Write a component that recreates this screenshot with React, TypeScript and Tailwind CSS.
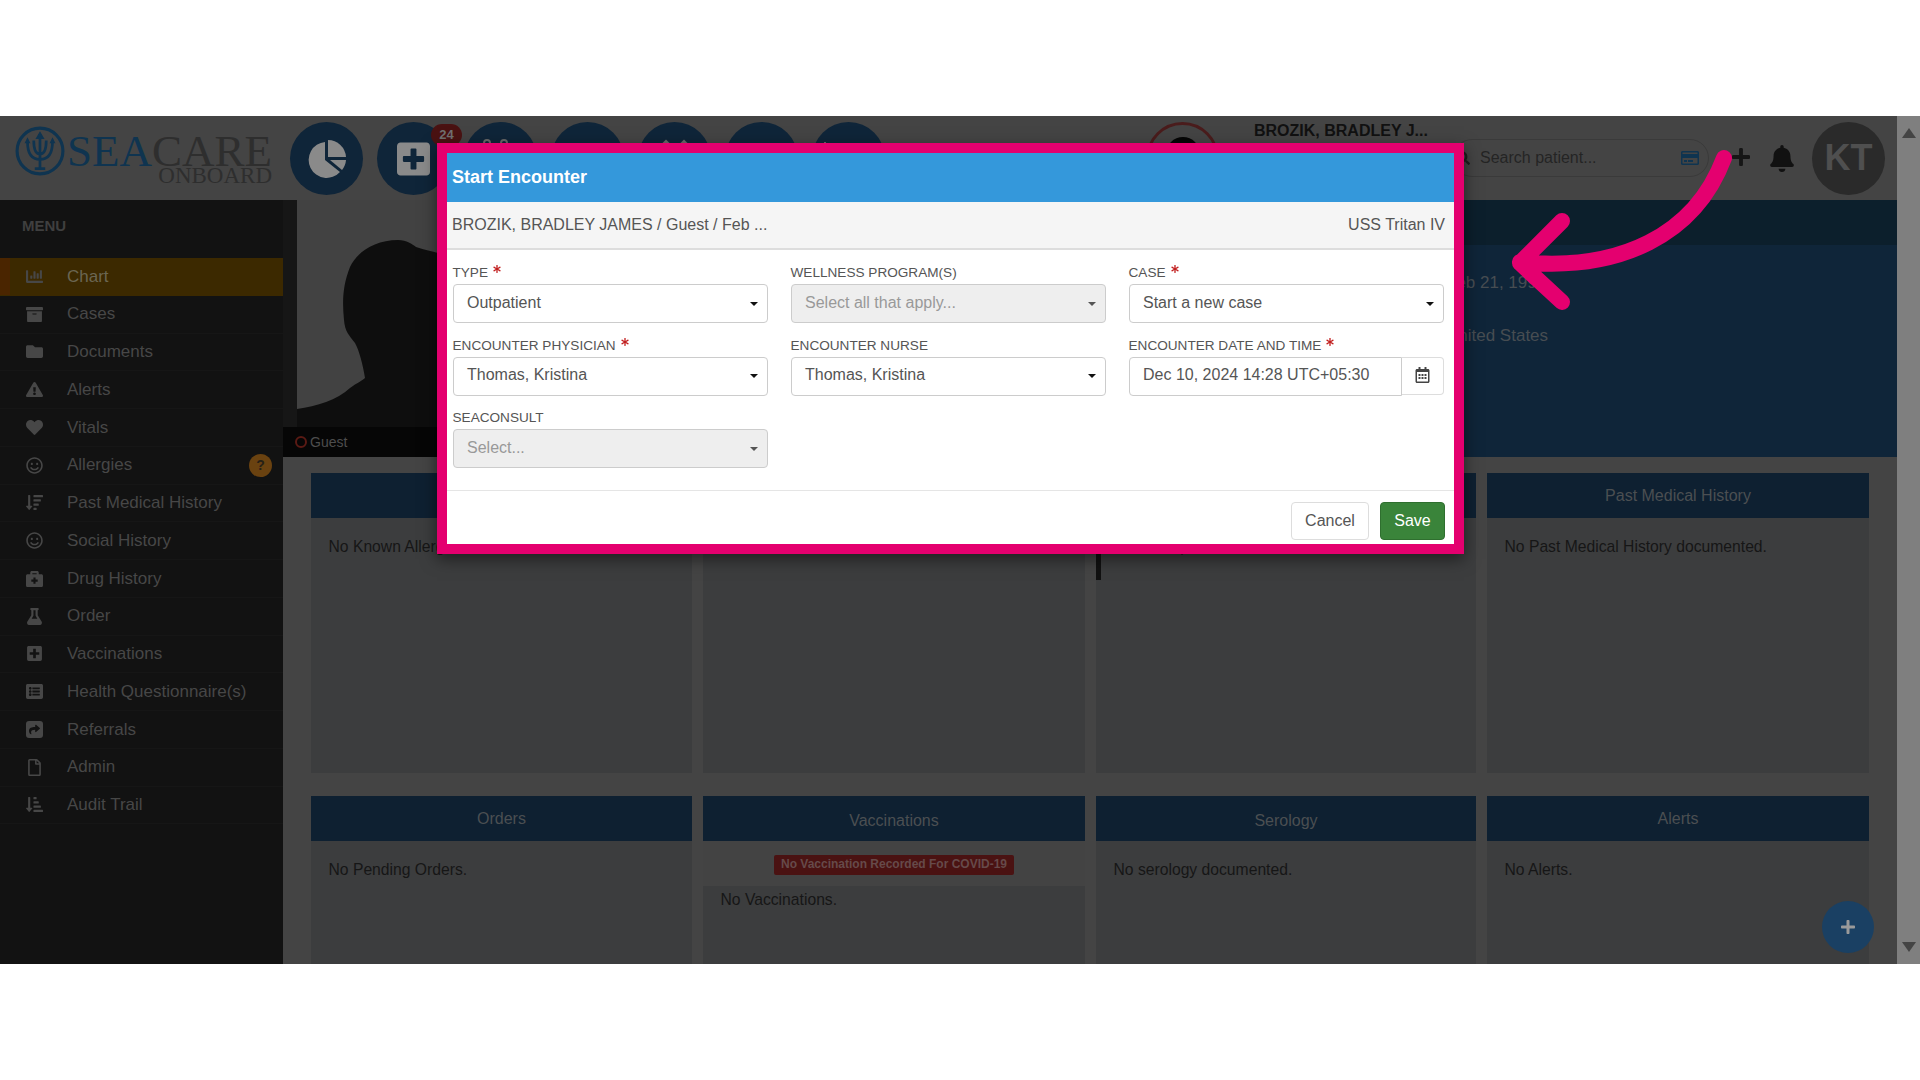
import React from "react";
import {
  FaArchive,
  FaAsterisk,
  FaBell,
  FaBriefcaseMedical,
  FaChartBar,
  FaExclamationTriangle,
  FaFlask,
  FaFolder,
  FaHeart,
  FaListAlt,
  FaPlus,
  FaPlusSquare,
  FaRegCalendarAlt,
  FaRegCreditCard,
  FaRegFile,
  FaRegSmile,
  FaSearch,
  FaShare,
  FaSortAmountDown,
  FaSortAmountDownAlt,
} from "react-icons/fa";

const ReferralIcon = ({ className }: { className?: string }) => (
  <div className={`${className} rounded-[3px] bg-[#474747] flex items-center justify-center`}>
    <FaShare className="w-[11px] h-[11px] text-[#121212]" />
  </div>
);

const menuItems = [
  { label: "Chart", icon: FaChartBar },
  { label: "Cases", icon: FaArchive },
  { label: "Documents", icon: FaFolder },
  { label: "Alerts", icon: FaExclamationTriangle },
  { label: "Vitals", icon: FaHeart },
  { label: "Allergies", icon: FaRegSmile },
  { label: "Past Medical History", icon: FaSortAmountDown },
  { label: "Social History", icon: FaRegSmile },
  { label: "Drug History", icon: FaBriefcaseMedical },
  { label: "Order", icon: FaFlask },
  { label: "Vaccinations", icon: FaPlusSquare },
  { label: "Health Questionnaire(s)", icon: FaListAlt },
  { label: "Referrals", icon: ReferralIcon },
  { label: "Admin", icon: FaRegFile },
  { label: "Audit Trail", icon: FaSortAmountDownAlt },
];

const Logo = () => (
  <div className="w-[290px] shrink-0 flex items-start pl-[15px] pt-[10px]">
    <svg viewBox="0 0 48 48" className="w-[50px] h-[50px] shrink-0 text-[#0f3450]" fill="none" stroke="currentColor">
      <circle cx="24" cy="24" r="22" strokeWidth="3" />
      <path d="M24 8v33M19 41h10M12 15c0 12 4 17 12 17s12-5 12-17M18 14c0 9 2 13 6 13s6-4 6-13" strokeWidth="2.6" />
      <path d="M24 6l-3.5 6h7zM12 12l-2 4h4zM36 12l-2 4h4z" fill="currentColor" strokeWidth="1" />
    </svg>
    <div className="flex flex-col items-end font-['Liberation_Serif',serif] ml-[2px]">
      <div className="text-[45px] leading-[32px] mt-[9px] whitespace-nowrap">
        <span className="text-[#0f3450]">SEA</span>
        <span className="text-[#2e2e2e]">CARE</span>
      </div>
      <div className="text-[23px] leading-[18px] text-[#2e2e2e]">ONBOARD</div>
    </div>
  </div>
);

const NavCircle = ({ children }: { children?: React.ReactNode }) => (
  <div className="relative w-[73px] h-[73px] rounded-full bg-[#0f2539] shrink-0 flex items-center justify-center">
    {children}
  </div>
);

const NavCircles = () => (
  <div className="flex gap-[14px] pt-[6px]">
    <NavCircle>
      <svg viewBox="0 0 40 40" className="w-[40px] h-[40px]" fill="#8a8a8a">
        <path d="M18 3A18 18 0 1 0 33 33L18 21Z" />
        <path d="M21 1A18 18 0 0 1 39 18H21Z" />
        <path d="M23 21H39A18 18 0 0 1 35 31Z" />
      </svg>
    </NavCircle>
    <NavCircle>
      <FaPlusSquare className="w-[33px] h-[38px] text-[#8a8a8a]" />
      <span className="absolute top-[2px] left-[54px] w-[31px] h-[22px] rounded-full bg-[#4a1212] text-[#707070] text-[13px] font-bold flex items-center justify-center">
        24
      </span>
    </NavCircle>
    <NavCircle>
      <div className="absolute top-[17px] left-[19px] flex gap-[9px]">
        <span className="w-[8px] h-[8px] rounded-full border-2 border-[#6a6a6a]" />
        <span className="w-[8px] h-[8px] rounded-full border-2 border-[#6a6a6a]" />
      </div>
    </NavCircle>
    <NavCircle />
    <NavCircle>
      <div className="absolute top-[20px] left-[22px] flex gap-[6px]">
        <span className="w-[12px] h-[12px] rotate-45 bg-[#6a6a6a]" />
        <span className="w-[12px] h-[12px] rotate-45 bg-[#6a6a6a]" />
      </div>
    </NavCircle>
    <NavCircle>
      <div className="absolute top-[21px] left-[26px] w-[20px] h-[20px] rounded-full bg-[#6a6a6a]" />
    </NavCircle>
    <NavCircle>
      <div className="absolute top-[20px] left-[12px] w-[2px] h-[8px] bg-[#6a6a6a]" />
    </NavCircle>
  </div>
);

const Header = () => (
  <div className="h-[84px] bg-[#444444] flex items-start shrink-0">
    <Logo />
    <NavCircles />
    <div className="ml-[261px] mt-[6px] w-[73px] h-[73px] rounded-full border-[3px] border-[#4a1c1c] shrink-0 flex justify-center overflow-hidden">
      <div className="mt-[12px] w-[34px] h-[40px] rounded-full bg-[#050505]" />
    </div>
    <div className="w-[199px] ml-[35px] pt-[5px] text-[#111111] font-bold text-[16px] leading-[20px] whitespace-nowrap">
      BROZIK, BRADLEY J...
    </div>
    <div className="mt-[23px] w-[256px] h-[38px] rounded-full border border-[#3a3a3a] flex items-center shrink-0 pl-[2px] pr-[9px]">
      <FaSearch className="w-[14px] h-[14px] text-[#1e1e1e]" />
      <span className="ml-[10px] text-[16px] text-[#242424]">Search patient...</span>
      <FaRegCreditCard className="ml-auto w-[18px] h-[18px] text-[#0f3450]" />
    </div>
    <FaPlus className="mt-[30px] ml-[23px] w-[18px] h-[22px] text-[#161616]" />
    <FaBell className="mt-[29px] ml-[19px] w-[26px] h-[27px] text-[#111111]" />
    <div className="ml-[17px] mt-[6px] w-[73px] h-[73px] pb-[2px] rounded-full bg-[#2a2a2a] text-[#4f4f4f] font-bold text-[36px] flex items-center justify-center shrink-0">
      KT
    </div>
  </div>
);

const Sidebar = () => (
  <div className="w-[283px] shrink-0 bg-[#121212] flex flex-col">
    <div className="h-[58px] pl-[22px] pt-[16px] text-[15px] leading-[20px] font-bold text-[#3f3f3f]">MENU</div>
    {menuItems.map((item, i) => {
      const Icon = item.icon;
      return (
        <div
          key={item.label + i}
          className={`relative h-[37.75px] shrink-0 flex items-center border-b ${
            i === 0 ? "bg-[#3c2900] border-transparent" : "border-[#161616]"
          }`}
        >
          {i === 0 && <div className="absolute left-0 top-0 bottom-0 w-[10px] bg-[#4a2500]" />}
          <div className="w-[67px] flex justify-center pl-[1px] shrink-0">
            <Icon className="w-[17px] h-[17px] text-[#474747]" />
          </div>
          <span className={`text-[17px] ${i === 0 ? "text-[#6b6652]" : "text-[#474747]"}`}>{item.label}</span>
          {item.label === "Allergies" && (
            <span className="absolute left-[249px] top-[7px] w-[23px] h-[23px] rounded-full bg-[#6a4210] text-[#262016] font-bold text-[14px] flex items-center justify-center">
              ?
            </span>
          )}
        </div>
      );
    })}
  </div>
);

const Banner = () => (
  <div className="h-[257px] shrink-0 flex">
    <div className="w-[217px] flex flex-col shrink-0">
      <div className="h-[227px] flex">
        <div className="w-[14px] bg-[#161616]" />
        <svg viewBox="0 0 203 227" className="w-[203px] h-[227px] bg-[#424242]">
          <path
            d="M0 209C20 206 40 200 53 188C60 183 66 180 68 178C66 165 62 150 58 143C52 135 48 132 47 120C45 100 46 85 53 67C60 52 78 40 101 40C110 40 115 44 119 47C128 50 135 51 141 53C170 65 190 90 190 130L190 165C195 180 203 195 203 227L0 227Z"
            fill="#0e0e0e"
          />
        </svg>
      </div>
      <div className="h-[30px] bg-[#060606] flex items-center pl-[12px]">
        <span className="w-[12px] h-[12px] rounded-full border-2 border-[#5a1a14]" />
        <span className="ml-[3px] text-[14px] text-[#4d4d4d]">Guest</span>
      </div>
    </div>
    <div className="flex-1 flex flex-col">
      <div className="h-[45px] bg-[#0c1f2c]" />
      <div className="flex-1 bg-[#0f2539] pl-[946px] pt-[27px] text-[17px] leading-[22px] text-[#474d52]">
        <div>Feb 21, 1990</div>
        <div className="mt-[31px]">United States</div>
      </div>
    </div>
  </div>
);

const Panel = ({
  title,
  text,
  children,
  bar,
  lowTitle,
}: {
  title: string;
  text?: string;
  children?: React.ReactNode;
  bar?: boolean;
  lowTitle?: boolean;
}) => (
  <div className="h-[300px] flex flex-col">
    <div
      className={`h-[45px] shrink-0 bg-[#0e2031] flex items-center justify-center text-[16px] text-[#4b4f52] ${
        lowTitle ? "pt-[4px]" : ""
      }`}
    >
      {title}
    </div>
    <div className="relative flex-1 bg-[#3c3d3e] text-[15.7px] leading-[24px] text-[#161616]">
      {bar && <div className="absolute left-0 top-[16px] bottom-[193px] w-[5px] bg-[#111111]" />}
      {text && <div className="px-[17.5px] pt-[16.5px]">{text}</div>}
      {children}
    </div>
  </div>
);

const Panels = () => (
  <div className="flex-1 min-h-0 overflow-hidden px-[28px] pt-[16px] grid grid-cols-[381px_382px_380px_382px] gap-x-[11px] gap-y-[23px] content-start">
    <Panel title="Allergies" text="No Known Allergies." />
    <Panel title="Problems" text="No Problems documented." />
    <Panel title="Vitals" text="No Vitals performed." bar />
    <Panel title="Past Medical History" text="No Past Medical History documented." />
    <Panel title="Orders" text="No Pending Orders." />
    <Panel title="Vaccinations" lowTitle>
      <div className="h-[45px] pt-[3px] bg-[#434343] flex items-center justify-center">
        <span className="h-[20px] px-[7px] rounded-[2px] bg-[#4a1212] text-[#664a4a] font-bold text-[12px] leading-[18px]">
          No Vaccination Recorded For COVID-19
        </span>
      </div>
      <div className="px-[17.5px] pt-[2px]">No Vaccinations.</div>
    </Panel>
    <Panel title="Serology" text="No serology documented." lowTitle />
    <Panel title="Alerts" text="No Alerts." />
  </div>
);

const Scrollbar = () => (
  <div className="w-[23px] shrink-0 bg-[#7f7f7f] flex flex-col items-center justify-between py-[12px]">
    <div className="w-0 h-0 border-x-[7px] border-x-transparent border-b-[10px] border-b-[#444444]" />
    <div className="w-0 h-0 border-x-[7px] border-x-transparent border-t-[10px] border-t-[#444444]" />
  </div>
);

const Label = ({ text, required }: { text: string; required?: boolean }) => (
  <div className="h-[20px] mb-[2px] -ml-[0.5px] flex items-start text-[13.6px] leading-[22px] text-[#555555] whitespace-nowrap">
    {text}
    {required && <FaAsterisk className="ml-[5px] mt-[3px] w-[8px] h-[8px] text-[#c21f1f]" />}
  </div>
);

const SelectBox = ({ value, disabled }: { value: string; disabled?: boolean }) => (
  <div
    className={`h-[39px] pl-[13px] pr-[9.5px] pb-[2px] flex items-center justify-between rounded-[4px] border border-[#cccccc] text-[16px] ${
      disabled ? "bg-[#eeeeee] text-[#999999]" : "bg-white text-[#555555]"
    }`}
  >
    <span>{value}</span>
    <span
      className={`mt-[2px] w-0 h-0 border-x-[4px] border-x-transparent border-t-[4px] ${
        disabled ? "border-t-[#555555]" : "border-t-[#111111]"
      }`}
    />
  </div>
);

const StartEncounterModal = () => (
  <div className="absolute left-[437px] top-[143px] w-[1027px] h-[411px] border-[10px] border-[#e4006f] bg-white flex flex-col shadow-[0_5px_15px_rgba(0,0,0,0.5)]">
    <div className="h-[49px] shrink-0 bg-[#3498db] px-[5px] flex items-center text-white font-bold text-[18px]">
      Start Encounter
    </div>
    <div className="h-[48px] shrink-0 bg-[#f5f5f5] border-b-2 border-[#dddddd] pl-[5px] pr-[9px] flex items-center justify-between text-[16px] text-[#555555]">
      <span>BROZIK, BRADLEY JAMES / Guest / Feb ...</span>
      <span>USS Tritan IV</span>
    </div>
    <div className="pl-[6px] pr-[10px] pt-[12px] pb-[22px] grid grid-cols-[315px_315px_315px] gap-x-[23px] gap-y-[11.5px] border-b border-[#e5e5e5]">
      <div>
        <Label text="TYPE" required />
        <SelectBox value="Outpatient" />
      </div>
      <div>
        <Label text="WELLNESS PROGRAM(S)" />
        <SelectBox value="Select all that apply..." disabled />
      </div>
      <div>
        <Label text="CASE" required />
        <SelectBox value="Start a new case" />
      </div>
      <div>
        <Label text="ENCOUNTER PHYSICIAN" required />
        <SelectBox value="Thomas, Kristina" />
      </div>
      <div>
        <Label text="ENCOUNTER NURSE" />
        <SelectBox value="Thomas, Kristina" />
      </div>
      <div>
        <Label text="ENCOUNTER DATE AND TIME" required />
        <div className="flex items-start">
          <div className="w-[273px] h-[39px] pl-[13px] pb-[2px] flex items-center rounded-l-[4px] border border-[#cccccc] text-[16px] text-[#555555]">
            Dec 10, 2024 14:28 UTC+05:30
          </div>
          <div className="flex-1 h-[38px] pb-[1px] flex items-center justify-center rounded-r-[4px] border border-l-0 border-[#dddddd]">
            <FaRegCalendarAlt className="w-[15px] h-[16px] text-[#444444]" />
          </div>
        </div>
      </div>
      <div>
        <Label text="SEACONSULT" />
        <SelectBox value="Select..." disabled />
      </div>
    </div>
    <div className="flex-1 flex justify-end items-start pt-[11px] pr-[9px] gap-[11px]">
      <button className="w-[78px] h-[38px] rounded-[4px] border border-[#dddddd] bg-white text-[16px] text-[#555555]">
        Cancel
      </button>
      <button className="w-[65px] h-[38px] rounded-[4px] border border-[#2f6f2f] bg-[#3a843a] text-[16px] text-white">
        Save
      </button>
    </div>
  </div>
);

const CurvedArrow = () => (
  <svg viewBox="0 0 260 220" className="absolute left-[1500px] top-[130px] w-[260px] h-[220px]" fill="none">
    <path
      d="M224 28C195 105 120 142 20 132M62 91 20 133 62 172"
      stroke="#e4006f"
      strokeWidth="16"
      strokeLinecap="round"
      strokeLinejoin="round"
    />
  </svg>
);

export default function App() {
  return (
    <div className="relative w-[1920px] h-[1080px] overflow-hidden bg-white pt-[116px] font-['Liberation_Sans',Arial,sans-serif]">
      <div className="h-[848px] flex">
        <div className="flex-1 min-w-0 flex flex-col">
          <Header />
          <div className="flex-1 min-h-0 flex">
            <Sidebar />
            <div className="relative flex-1 min-w-0 bg-[#444444] flex flex-col">
              <Banner />
              <Panels />
              <button className="absolute left-[1539px] top-[701px] w-[52px] h-[52px] rounded-full bg-[#1a4063] flex items-center justify-center">
                <FaPlus className="w-[16px] h-[16px] text-[#9a9a9a]" />
              </button>
            </div>
          </div>
        </div>
        <Scrollbar />
      </div>
      <StartEncounterModal />
      <CurvedArrow />
    </div>
  );
}
